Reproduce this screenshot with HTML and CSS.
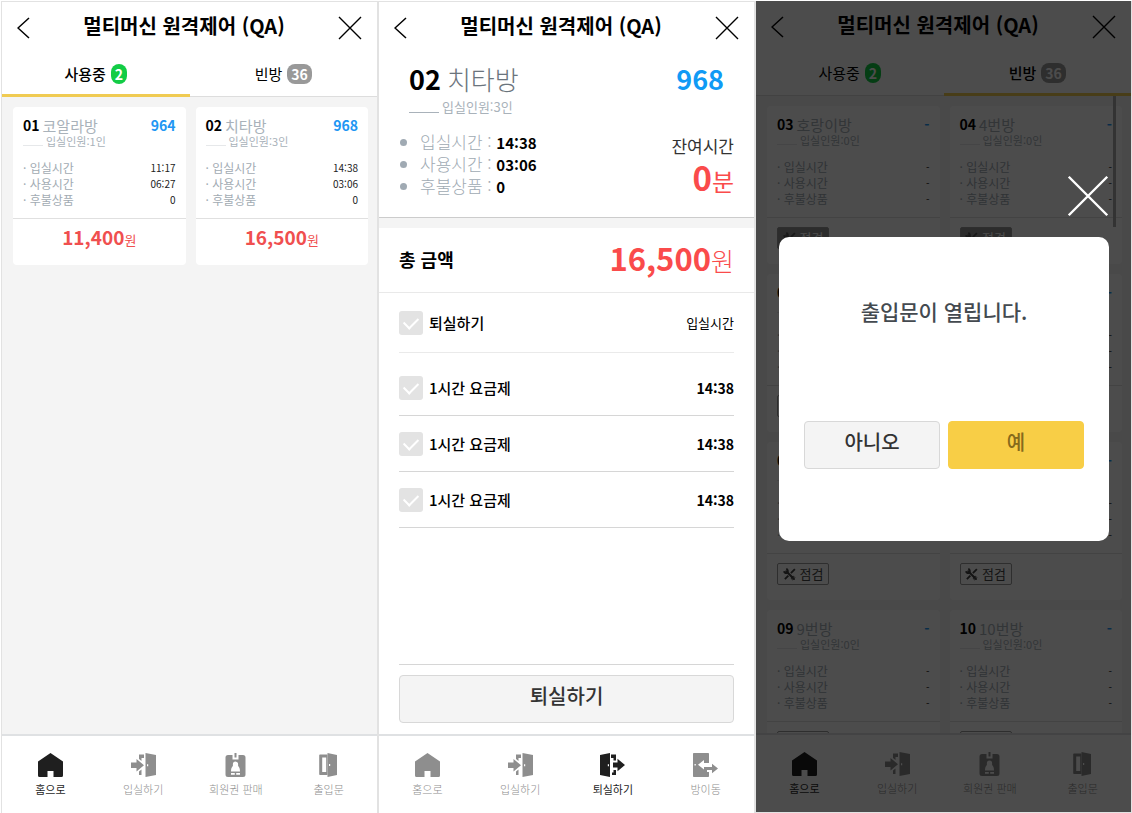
FILE: index.html
```html
<!DOCTYPE html>
<html lang="ko">
<head>
    <meta charset="UTF-8">
    <meta name="viewport" content="width=device-width, initial-scale=1.0">
    <title>멀티머신 원격제어</title>
    <link rel="stylesheet" href="styles.css">
</head>
<body>
    <!-- Shared icons -->
    <svg class="sprite" aria-hidden="true">
        <symbol id="i-back" viewBox="0 0 13 22"><path d="M12 1L1 11l11 10" fill="none" stroke="currentColor" stroke-width="1.5"/></symbol>
        <symbol id="i-close" viewBox="0 0 24 24"><path d="M1 1l22 22M23 1L1 23" fill="none" stroke="currentColor" stroke-width="1.4"/></symbol>
        <symbol id="i-home" viewBox="0 0 25 24"><path d="M12.5 0L25 8.500V22.500a1.500 1.500 0 0 1-1.500 1.500H15.500v-6h-6v6H1.500A1.500 1.500 0 0 1 0 22.500V8.500z"/></symbol>
        <symbol id="i-enter" viewBox="0 0 25 24"><path d="M0 9.500h5.500V6L13 12.200l-7.500 6.200V15H0zM8 1.500h5V5h-2.500v3L8 6zM8 18.500l2.500-2V22H8z"/><path fill-rule="evenodd" d="M14.500 0L25 2v20l-10.500 2V0zM16 11.200v2h1.200v-2z"/></symbol>
        <symbol id="i-exit" viewBox="0 0 25 24"><path fill-rule="evenodd" d="M0 2l10-2v24L0 22zM7.800 11.200v2H9v-2z"/><path d="M11 1.500h5v6h-2.500V5H11zM13 9.500h4.500V5.800L25 12l-7.500 6.200v-3.700H13zM13.500 17H16v5h-4v-2.500h1.500z"/></symbol>
        <symbol id="i-member" viewBox="0 0 25 24"><path fill-rule="evenodd" d="M11.500 0h2v4.500h-2zM5 2h4.500v4.500h6V2H20a2.500 2.500 0 0 1 2.500 2.500v17A2.500 2.500 0 0 1 20 24H5a2.500 2.500 0 0 1-2.500-2.500v-17A2.500 2.500 0 0 1 5 2zM12.500 8.500a2.600 2.600 0 0 0-2.600 2.600v1.900C8.500 14 8 16 8 18.500h9c0-2.500-.5-4.500-1.900-5.500v-1.900a2.600 2.600 0 0 0-2.600-2.600zM8 20v1.800h3.800V20zM13.200 20v1.800H17V20z"/></symbol>
        <symbol id="i-door" viewBox="0 0 25 24"><path fill-rule="evenodd" d="M4 1.500h7.500V22H4a.8.8 0 0 1-.8-.8V2.300a.8.8 0 0 1 .8-.8zM6.200 4.500v14.500h4V4.500z"/><path fill-rule="evenodd" d="M11.500 0L21 2v20l-9.500 2zM13 11v2h1.200v-2z"/></symbol>
        <symbol id="i-move" viewBox="0 0 25 24"><path fill-rule="evenodd" d="M.8 0H15.200a.8.8 0 0 1 .8.8V10h-5V7l-6 4.800 6 4.700V14h3v5h2v4.200a.8.8 0 0 1-.8.8H.8a.8.8 0 0 1-.8-.8V.8A.8.8 0 0 1 .8 0zM1.500 11v1.500h1.300V11z"/><path d="M13 14h6v-3.200l6 4.700-6 4.700V17h-6z"/></symbol>
        <symbol id="i-tools" viewBox="0 0 14 14"><path d="M3.500 3.500l8.300 8.300" fill="none" stroke="currentColor" stroke-width="2.2" stroke-linecap="round"/><path d="M1 3.500A2.500 2.500 0 0 0 4.500 5.200 2.500 2.500 0 0 0 3.500 1M12.800 1.200L8.500 5.500M5.800 8.200L2 12" fill="none" stroke="currentColor" stroke-width="2"/><path d="M13 10.500a2.500 2.500 0 0 0-3.500-1.200M9.400 9.400a2.500 2.500 0 0 0 1.200 3.600" fill="none" stroke="currentColor"/></symbol>
    </svg>

    <main class="screens">
        <!-- Rooms in use -->
        <section class="screen">
            <header class="top">
                <button class="icon-btn" aria-label="뒤로"><svg class="i-back"><use href="#i-back"/></svg></button>
                <h1>멀티머신 원격제어 (QA)</h1>
                <button class="icon-btn" aria-label="닫기"><svg class="i-close"><use href="#i-close"/></svg></button>
            </header>
            <nav class="tabs">
                <a href="#" class="tab active">사용중 <span class="badge green">2</span></a>
                <a href="#" class="tab">빈방 <span class="badge">36</span></a>
            </nav>
            <div class="rooms">
                <article class="room">
                    <div class="room-info">
                        <div class="room-head"><b>01</b><span class="room-name">코알라방</span><b class="room-no">964</b></div>
                        <div class="people"><i></i>입실인원:1인</div>
                        <dl>
                            <dt>· 입실시간</dt><dd>11:17</dd>
                            <dt>· 사용시간</dt><dd>06:27</dd>
                            <dt>· 후불상품</dt><dd>0</dd>
                        </dl>
                    </div>
                    <p class="price"><b>11,400</b>원</p>
                </article>
                <article class="room">
                    <div class="room-info">
                        <div class="room-head"><b>02</b><span class="room-name">치타방</span><b class="room-no">968</b></div>
                        <div class="people"><i></i>입실인원:3인</div>
                        <dl>
                            <dt>· 입실시간</dt><dd>14:38</dd>
                            <dt>· 사용시간</dt><dd>03:06</dd>
                            <dt>· 후불상품</dt><dd>0</dd>
                        </dl>
                    </div>
                    <p class="price"><b>16,500</b>원</p>
                </article>
            </div>
            <nav class="bottom">
                <a href="#" class="on"><svg><use href="#i-home"/></svg>홈으로</a>
                <a href="#"><svg><use href="#i-enter"/></svg>입실하기</a>
                <a href="#"><svg><use href="#i-member"/></svg>회원권 판매</a>
                <a href="#"><svg><use href="#i-door"/></svg>출입문</a>
            </nav>
        </section>

        <!-- Check out -->
        <section class="screen">
            <header class="top">
                <button class="icon-btn" aria-label="뒤로"><svg class="i-back"><use href="#i-back"/></svg></button>
                <h1>멀티머신 원격제어 (QA)</h1>
                <button class="icon-btn" aria-label="닫기"><svg class="i-close"><use href="#i-close"/></svg></button>
            </header>
            <div class="detail">
                <div class="detail-head"><b>02</b><span>치타방</span><b class="detail-no">968</b></div>
                <div class="detail-people"><i></i>입실인원:3인</div>
                <div class="detail-body">
                    <ul>
                        <li>입실시간 : <b>14:38</b></li>
                        <li>사용시간 : <b>03:06</b></li>
                        <li>후불상품 : <b>0</b></li>
                    </ul>
                    <div class="remain">
                        <p>잔여시간</p>
                        <p class="remain-time"><b>0</b>분</p>
                    </div>
                </div>
            </div>
            <div class="total">
                <h2>총 금액</h2>
                <p><b>16,500</b>원</p>
            </div>
            <div class="fees">
                <div class="fee fee-all">
                    <label><input type="checkbox">퇴실하기</label>
                    <span>입실시간</span>
                </div>
                <div class="fee">
                    <label><input type="checkbox">1시간 요금제</label>
                    <b>14:38</b>
                </div>
                <div class="fee">
                    <label><input type="checkbox">1시간 요금제</label>
                    <b>14:38</b>
                </div>
                <div class="fee">
                    <label><input type="checkbox">1시간 요금제</label>
                    <b>14:38</b>
                </div>
                <div class="checkout">
                    <button class="btn">퇴실하기</button>
                </div>
            </div>
            <nav class="bottom">
                <a href="#"><svg><use href="#i-home"/></svg>홈으로</a>
                <a href="#"><svg><use href="#i-enter"/></svg>입실하기</a>
                <a href="#" class="on"><svg><use href="#i-exit"/></svg>퇴실하기</a>
                <a href="#"><svg><use href="#i-move"/></svg>방이동</a>
            </nav>
        </section>

        <!-- Empty rooms with the door popup open -->
        <section class="screen screen-popup">
            <header class="top">
                <button class="icon-btn" aria-label="뒤로"><svg class="i-back"><use href="#i-back"/></svg></button>
                <h1>멀티머신 원격제어 (QA)</h1>
                <button class="icon-btn" aria-label="닫기"><svg class="i-close"><use href="#i-close"/></svg></button>
            </header>
            <nav class="tabs">
                <a href="#" class="tab">사용중 <span class="badge green">2</span></a>
                <a href="#" class="tab active">빈방 <span class="badge">36</span></a>
            </nav>
            <div class="rooms">
                <article class="room">
                    <div class="room-info">
                        <div class="room-head"><b>03</b><span class="room-name">호랑이방</span><b class="room-no">-</b></div>
                        <div class="people"><i></i>입실인원:0인</div>
                        <dl>
                            <dt>· 입실시간</dt><dd>-</dd>
                            <dt>· 사용시간</dt><dd>-</dd>
                            <dt>· 후불상품</dt><dd>-</dd>
                        </dl>
                    </div>
                    <div class="room-foot"><button class="check on"><svg><use href="#i-tools"/></svg>점검</button></div>
                </article>
                <article class="room">
                    <div class="room-info">
                        <div class="room-head"><b>04</b><span class="room-name">4번방</span><b class="room-no">-</b></div>
                        <div class="people"><i></i>입실인원:0인</div>
                        <dl>
                            <dt>· 입실시간</dt><dd>-</dd>
                            <dt>· 사용시간</dt><dd>-</dd>
                            <dt>· 후불상품</dt><dd>-</dd>
                        </dl>
                    </div>
                    <div class="room-foot"><button class="check on"><svg><use href="#i-tools"/></svg>점검</button></div>
                </article>
                <article class="room">
                    <div class="room-info">
                        <div class="room-head"><b>05</b><span class="room-name">5번방</span><b class="room-no">-</b></div>
                        <div class="people"><i></i>입실인원:0인</div>
                        <dl>
                            <dt>· 입실시간</dt><dd>-</dd>
                            <dt>· 사용시간</dt><dd>-</dd>
                            <dt>· 후불상품</dt><dd>-</dd>
                        </dl>
                    </div>
                    <div class="room-foot"><button class="check"><svg><use href="#i-tools"/></svg>점검</button></div>
                </article>
                <article class="room">
                    <div class="room-info">
                        <div class="room-head"><b>06</b><span class="room-name">6번방</span><b class="room-no">-</b></div>
                        <div class="people"><i></i>입실인원:0인</div>
                        <dl>
                            <dt>· 입실시간</dt><dd>-</dd>
                            <dt>· 사용시간</dt><dd>-</dd>
                            <dt>· 후불상품</dt><dd>-</dd>
                        </dl>
                    </div>
                    <div class="room-foot"><button class="check"><svg><use href="#i-tools"/></svg>점검</button></div>
                </article>
                <article class="room">
                    <div class="room-info">
                        <div class="room-head"><b>07</b><span class="room-name">7번방</span><b class="room-no">-</b></div>
                        <div class="people"><i></i>입실인원:0인</div>
                        <dl>
                            <dt>· 입실시간</dt><dd>-</dd>
                            <dt>· 사용시간</dt><dd>-</dd>
                            <dt>· 후불상품</dt><dd>-</dd>
                        </dl>
                    </div>
                    <div class="room-foot"><button class="check"><svg><use href="#i-tools"/></svg>점검</button></div>
                </article>
                <article class="room">
                    <div class="room-info">
                        <div class="room-head"><b>08</b><span class="room-name">8번방</span><b class="room-no">-</b></div>
                        <div class="people"><i></i>입실인원:0인</div>
                        <dl>
                            <dt>· 입실시간</dt><dd>-</dd>
                            <dt>· 사용시간</dt><dd>-</dd>
                            <dt>· 후불상품</dt><dd>-</dd>
                        </dl>
                    </div>
                    <div class="room-foot"><button class="check"><svg><use href="#i-tools"/></svg>점검</button></div>
                </article>
                <article class="room">
                    <div class="room-info">
                        <div class="room-head"><b>09</b><span class="room-name">9번방</span><b class="room-no">-</b></div>
                        <div class="people"><i></i>입실인원:0인</div>
                        <dl>
                            <dt>· 입실시간</dt><dd>-</dd>
                            <dt>· 사용시간</dt><dd>-</dd>
                            <dt>· 후불상품</dt><dd>-</dd>
                        </dl>
                    </div>
                    <div class="room-foot"><button class="check"><svg><use href="#i-tools"/></svg>점검</button></div>
                </article>
                <article class="room">
                    <div class="room-info">
                        <div class="room-head"><b>10</b><span class="room-name">10번방</span><b class="room-no">-</b></div>
                        <div class="people"><i></i>입실인원:0인</div>
                        <dl>
                            <dt>· 입실시간</dt><dd>-</dd>
                            <dt>· 사용시간</dt><dd>-</dd>
                            <dt>· 후불상품</dt><dd>-</dd>
                        </dl>
                    </div>
                    <div class="room-foot"><button class="check"><svg><use href="#i-tools"/></svg>점검</button></div>
                </article>
                <div class="scrollbar"></div>
            </div>
            <nav class="bottom">
                <a href="#" class="on"><svg><use href="#i-home"/></svg>홈으로</a>
                <a href="#"><svg><use href="#i-enter"/></svg>입실하기</a>
                <a href="#"><svg><use href="#i-member"/></svg>회원권 판매</a>
                <a href="#"><svg><use href="#i-door"/></svg>출입문</a>
            </nav>
            <div class="overlay">
                <button class="icon-btn popup-close" aria-label="닫기"><svg><use href="#i-close"/></svg></button>
                <div class="popup" role="dialog">
                    <p>출입문이 열립니다.</p>
                    <div class="popup-btns">
                        <button class="btn">아니오</button>
                        <button class="btn yes">예</button>
                    </div>
                </div>
            </div>
        </section>
    </main>
</body>
</html>
```

FILE: styles.css
```css
* {
    box-sizing: border-box;
}
body {
    margin: 0;
    padding-top: 1px;
    font-family: "Noto Sans CJK KR", sans-serif;
    color: #000;
}
h1, h2, p, ul, dl, dd {
    margin: 0;
    padding: 0;
}
b {
    font-weight: 700;
}
a {
    color: inherit;
    text-decoration: none;
}
button {
    font-family: inherit;
    cursor: pointer;
}
svg {
    fill: currentColor;
}
.sprite {
    display: none;
}
.screens {
    display: grid;
    grid-template-columns: repeat(3, 1fr);
    padding-left: 1px;
}
.screen {
    position: relative;
    display: flex;
    flex-direction: column;
    height: calc(100vh - 1px);
    min-height: 640px;
    border: 1px solid #e2e2e2;
    border-bottom: 0;
    background-color: #f4f4f4;
}
.screen-popup {
    border-top: 0;
    border-bottom: 1px solid #e2e2e2;
}

/* Header */
.top {
    display: flex;
    flex-shrink: 0;
    align-items: center;
    justify-content: space-between;
    height: 52px;
    padding: 0 15px;
    background-color: #fff;
}
h1 {
    padding-bottom: 4px;
    font-size: 20px;
    line-height: 24px;
    font-weight: 700;
}
.icon-btn {
    display: flex;
    padding: 0;
    border: 0;
    background: none;
    color: #000;
}
.i-back {
    width: 13px;
    height: 22px;
}
.i-close {
    width: 24px;
    height: 24px;
}

/* Tabs */
.tabs {
    display: flex;
    flex-shrink: 0;
    background-color: #fff;
    border-bottom: 1px solid #ddd;
}
.tab {
    display: flex;
    flex: 1;
    align-items: center;
    justify-content: center;
    gap: 5px;
    height: 43px;
    margin-bottom: -1px;
    padding-bottom: 1px;
    border-bottom: 3px solid transparent;
    font-size: 15px;
}
.tab.active {
    border-bottom-color: #f0cb52;
    font-weight: 500;
}
.badge {
    height: 20px;
    padding: 0 4px;
    border-radius: 8px;
    background-color: #999;
    color: #fff;
    font-size: 14px;
    line-height: 20px;
    font-weight: 700;
}
.badge.green {
    background-color: #12cc45;
}

/* Room cards */
.rooms {
    position: relative;
    display: grid;
    flex: 1;
    grid-template-columns: 1fr 1fr;
    align-content: start;
    gap: 10px;
    min-height: 0;
    padding: 10px 9px 0 11px;
    overflow: hidden;
}
.room {
    height: 158px;
    border-radius: 4px;
    background-color: #fff;
}
.room-info {
    padding: 9px 10px 10px;
    border-bottom: 1px solid #e0e0e0;
}
.room-head {
    display: flex;
    gap: 3px;
    font-size: 14px;
    line-height: 19px;
}
.room-name {
    color: #a9b2ba;
    font-size: 15px;
}
.room-no {
    margin-left: auto;
    color: #2196f3;
}
.people {
    display: flex;
    gap: 3px;
    margin-bottom: 13px;
    color: #a9b2ba;
    font-size: 11px;
    line-height: 12px;
}
.people i {
    width: 20px;
    height: 11px;
    border-bottom: 1px solid #e6e8ea;
}
dl {
    display: grid;
    grid-template-columns: 1fr auto;
    line-height: 16px;
}
dt {
    color: #a2abb3;
    font-size: 12px;
}
dd {
    color: #222;
    font-size: 10px;
    text-align: right;
}
.price {
    color: #f04f4f;
    font-size: 13px;
    line-height: 36px;
    text-align: center;
}
.price b {
    font-size: 19px;
}
.room-foot {
    padding: 9px 10px;
}
.check {
    display: flex;
    align-items: center;
    justify-content: center;
    gap: 4px;
    width: 52px;
    height: 22px;
    padding: 0;
    border: 1px solid #999;
    border-radius: 2px;
    background-color: #fff;
    color: #444;
    font-size: 13px;
    line-height: 20px;
}
.check svg {
    width: 13px;
    height: 13px;
}
.check.on {
    background-color: #939393;
    color: #fff;
}
.check.on svg {
    color: #555;
}
.scrollbar {
    position: absolute;
    top: 0;
    right: 15px;
    width: 3px;
    height: 131px;
    background-color: #aaa;
}

/* Check out */
.detail {
    padding: 7px 20px 19px;
    border-bottom: 1px solid #ccc;
    background-color: #fff;
}
.detail-head {
    display: flex;
    gap: 6px;
    padding: 0 10px;
    font-size: 27px;
    line-height: 36px;
}
.detail-head span {
    color: #6b747d;
    font-size: 26px;
    font-weight: 300;
}
.detail-no {
    margin-left: auto;
    color: #109af5;
}
.detail-people {
    display: flex;
    gap: 3px;
    padding: 0 10px;
    margin-bottom: 14px;
    color: #a9b2ba;
    font-size: 13px;
    line-height: 20px;
}
.detail-people i {
    width: 30px;
    height: 16px;
    border-bottom: 1px solid #a9b2ba;
}
.detail-body {
    display: flex;
    justify-content: space-between;
    height: 67px;
}
.detail ul {
    padding-left: 21px;
    color: #a0aab3;
    font-size: 17px;
    line-height: 22px;
    font-weight: 300;
}
.detail li b {
    color: #000;
    font-size: 15px;
    line-height: 20px;
}
.remain {
    color: #333;
    font-size: 17px;
    line-height: 30px;
    text-align: right;
}
.remain-time {
    color: #fa4b4b;
    font-size: 24px;
    line-height: 32px;
}
.remain-time b {
    font-size: 33px;
}
.total {
    display: flex;
    align-items: center;
    justify-content: space-between;
    height: 65px;
    margin-top: 10px;
    padding: 0 20px 2px;
    border-bottom: 1px solid #e9e9e9;
    background-color: #fff;
}
.total h2 {
    font-size: 18px;
    font-weight: 700;
}
.total p {
    color: #fa4b4b;
    font-size: 25px;
    line-height: 40px;
    font-weight: 300;
}
.total b {
    font-size: 31px;
}
.fees {
    display: flex;
    flex: 1;
    flex-direction: column;
    padding: 0 20px;
    background-color: #fff;
}
.fee {
    display: flex;
    align-items: center;
    justify-content: space-between;
    height: 56px;
    border-bottom: 1px solid #d6d6d6;
    font-size: 15px;
}
.fee-all {
    height: 60px;
    margin-bottom: 7px;
    border-bottom-color: #eaeaea;
}
.fee label {
    display: flex;
    align-items: center;
    gap: 6px;
    line-height: 24px;
    font-weight: 500;
}
.fee b {
    font-size: 14px;
}
.fee span {
    font-size: 13px;
}
.fee input {
    appearance: none;
    display: grid;
    place-items: center;
    width: 24px;
    height: 24px;
    margin: 0;
    border-radius: 3px;
    background-color: #e3e3e3;
}
.fee input::before {
    content: "";
    width: 12px;
    height: 7px;
    margin-bottom: 3px;
    border-left: 2px solid #fff;
    border-bottom: 2px solid #fff;
    transform: rotate(-45deg);
}
.checkout {
    margin-top: auto;
    padding: 10px 0 11px;
    border-top: 1px solid #d6d6d6;
}
.btn {
    width: 100%;
    height: 48px;
    padding: 0 0 8px;
    border: 1px solid #d8d8d8;
    border-radius: 4px;
    background-color: #f4f4f4;
    color: #333;
    font-size: 20px;
    font-weight: 500;
}
.btn.yes {
    border-color: #f8ce46;
    background-color: #f8ce46;
    color: #866a1c;
}

/* Bottom menu */
.bottom {
    display: flex;
    flex-shrink: 0;
    height: 79px;
    padding: 17px 2px 0;
    border-top: 2px solid #dfe1e3;
    background-color: #fff;
    color: #8e8e8e;
    font-size: 11px;
    line-height: 16px;
    font-weight: 300;
}
.bottom a {
    display: flex;
    flex: 1;
    flex-direction: column;
    align-items: center;
    gap: 4px;
}
.bottom a.on {
    color: #1f1f1f;
    font-weight: 400;
}
.bottom svg {
    width: 25px;
    height: 24px;
}

/* Popup */
.overlay {
    position: absolute;
    inset: 0;
    display: flex;
    flex-direction: column;
    padding: 174px 22px 0 23px;
    background-color: rgba(0, 0, 0, 0.7);
}
.popup-close {
    align-self: flex-end;
    margin-bottom: 20px;
    color: #fff;
}
.popup-close svg {
    width: 42px;
    height: 42px;
}
.popup {
    padding: 60px 25px 72px;
    border-radius: 10px;
    background-color: #fff;
    text-align: center;
}
.popup p {
    margin-bottom: 96px;
    color: #444a50;
    font-size: 21px;
    line-height: 28px;
    font-weight: 500;
}
.popup-btns {
    display: flex;
    gap: 8px;
}
```
